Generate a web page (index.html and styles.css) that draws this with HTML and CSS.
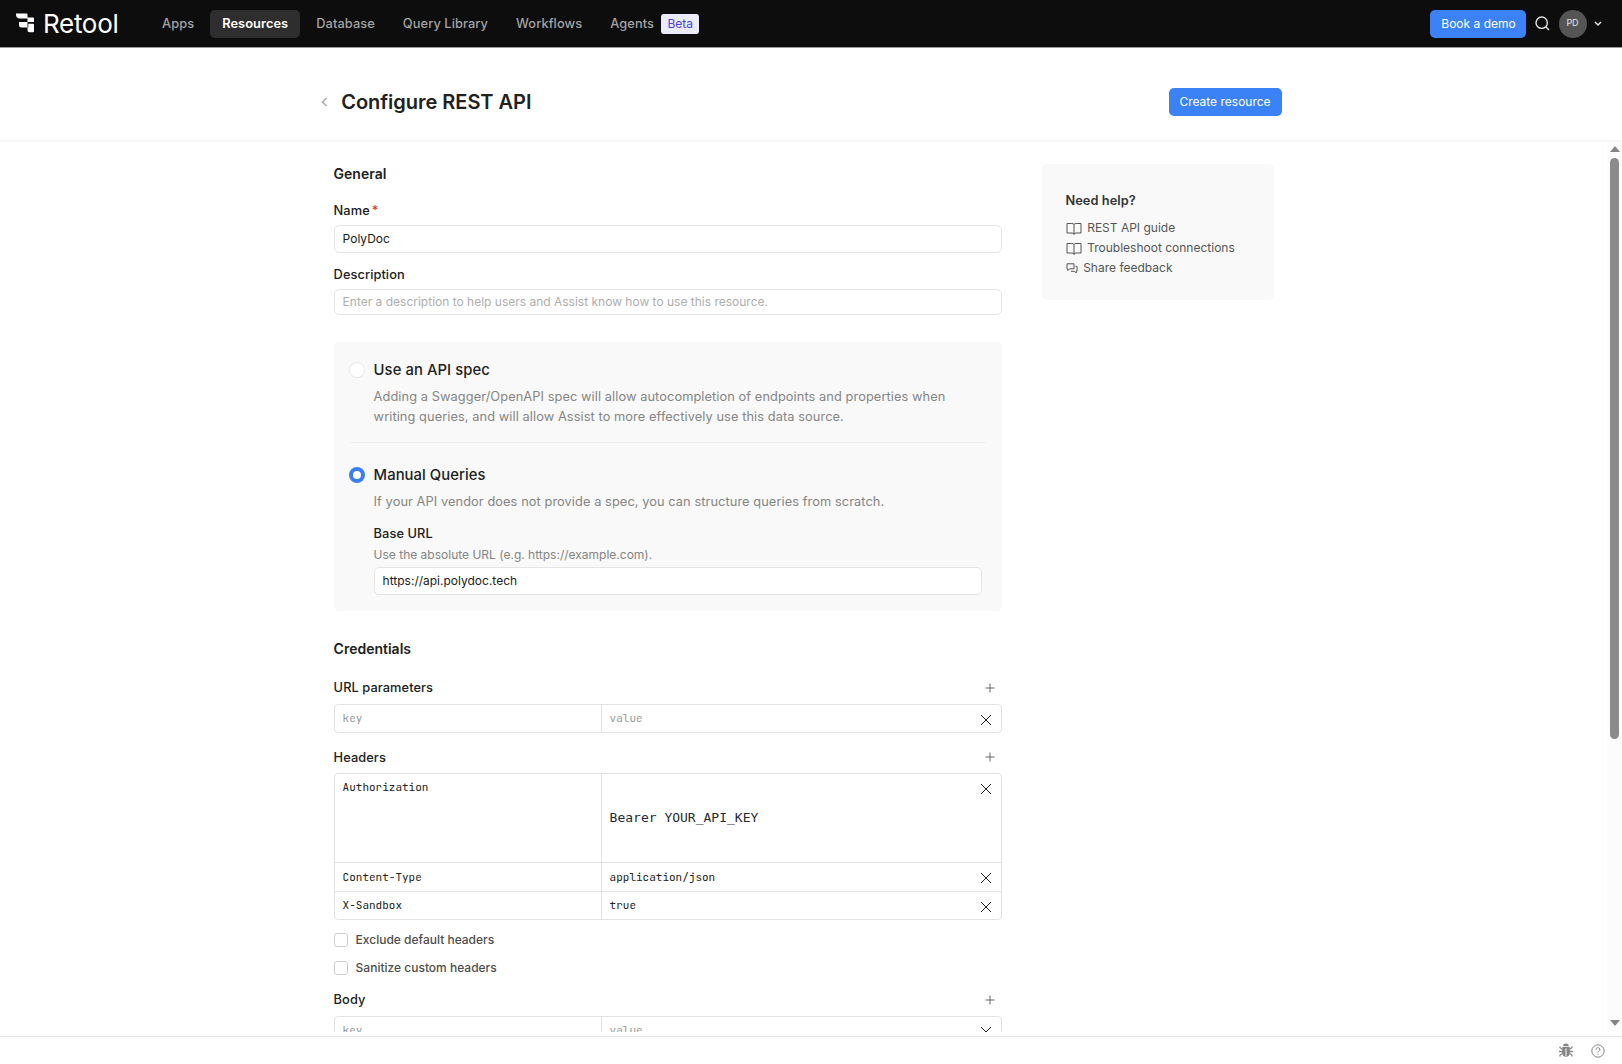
FILE: index.html
```html
<!DOCTYPE html>
<html lang="en">
<head>
<meta charset="utf-8">
<title>Configure REST API</title>
<link rel="stylesheet" href="styles.css">
</head>
<body>
<svg class="defs" aria-hidden="true">
  <symbol id="x" viewBox="0 0 12 12"><path d="M1 1l10 10M11 1L1 11"/></symbol>
  <symbol id="plus" viewBox="0 0 10 10"><path d="M5 .5v9M.5 5h9"/></symbol>
  <symbol id="book" viewBox="0 0 16 14"><path d="M8 2.500C7.600 1.800 6.800 1.500 5.800 1.500H1v9.500h5c1.100 0 1.700.4 2 1 .3-.6.9-1 2-1h5V1.500h-4.800C9.200 1.500 8.400 1.800 8 2.500zM8 2.500v10.500"/></symbol>
</svg>
<header class="topbar">
  <div class="brand">
    <svg class="mark" width="19" height="20" viewBox="0 0 19 20"><path d="M0 .5h10.500a1 1 0 0 1 1 1v3H17a1 1 0 0 1 1 1v3.500h-6.500v5.500H5.500A2.500 2.500 0 0 1 3 12V9h8.500V5.500H4A4 4 0 0 1 0 1.500zM12.300 10.800H17a1 1 0 0 1 1 1v6.500a1 1 0 0 1-1 1h-3.500a2 2 0 0 1-2-2V14.500h.8z"/></svg>
    <span class="wordmark">Retool</span>
  </div>
  <nav class="nav">
    <a>Apps</a><a class="active">Resources</a><a>Database</a><a>Query Library</a><a>Workflows</a><a>Agents</a><span class="beta">Beta</span>
  </nav>
  <div class="tools">
    <span class="btn demo">Book a demo</span>
    <svg class="search" width="15" height="15" viewBox="0 0 15 15"><circle cx="6.700" cy="6.700" r="5.700"/><path d="M10.800 10.800L14 14"/></svg>
    <span class="avatar">PD</span>
    <svg class="caret" width="8" height="6" viewBox="0 0 8 6"><path d="M1 1l3 3 3-3"/></svg>
  </div>
</header>
<section class="pagehead">
  <svg class="back" width="7" height="10" viewBox="0 0 7 10"><path d="M5.500 1L1.500 5l4 4"/></svg>
  <h1>Configure REST API</h1>
  <span class="btn create">Create resource</span>
</section>
<div class="scroll">
  <main class="main">
    <h2 class="general">General</h2>
    <div class="label name">Name<span class="req">*</span></div>
    <div class="input name-input"><span>PolyDoc</span></div>
    <div class="label desc">Description</div>
    <div class="input desc-input"><span class="ph">Enter a description to help users and Assist know how to use this resource.</span></div>
    <div class="card">
      <div class="option spec">
        <span class="radio"></span>
        <div class="body">
          <h3>Use an API spec</h3>
          <p>Adding a Swagger/OpenAPI spec will allow autocompletion of endpoints and properties when<br>writing queries, and will allow Assist to more effectively use this data source.</p>
        </div>
      </div>
      <div class="option">
        <span class="radio on"></span>
        <div class="body">
          <h3>Manual Queries</h3>
          <p>If your API vendor does not provide a spec, you can structure queries from scratch.</p>
          <div class="label base">Base URL</div>
          <div class="hint">Use the absolute URL (e.g. https://example.com).</div>
          <div class="input url-input"><span>https://api.polydoc.tech</span></div>
        </div>
      </div>
    </div>
    <h2 class="cred">Credentials</h2>
    <div class="grouphead params"><span>URL parameters</span><svg class="plus"><use href="#plus"/></svg></div>
    <div class="table">
      <div class="row"><div class="cell key ph2">key</div><div class="cell ph2">value</div><svg class="x"><use href="#x"/></svg></div>
    </div>
    <div class="grouphead headers"><span>Headers</span><svg class="plus"><use href="#plus"/></svg></div>
    <div class="table">
      <div class="row tall"><div class="cell key">Authorization</div><div class="cell token">Bearer YOUR_API_KEY</div><svg class="x"><use href="#x"/></svg></div>
      <div class="row mid"><div class="cell key">Content-Type</div><div class="cell">application/json</div><svg class="x"><use href="#x"/></svg></div>
      <div class="row"><div class="cell key">X-Sandbox</div><div class="cell">true</div><svg class="x"><use href="#x"/></svg></div>
    </div>
    <div class="checks">
      <div class="check"><i></i><span>Exclude default headers</span></div>
      <div class="check"><i></i><span>Sanitize custom headers</span></div>
    </div>
    <div class="grouphead bodyhead"><span>Body</span><svg class="plus"><use href="#plus"/></svg></div>
    <div class="table">
      <div class="row"><div class="cell key ph2">key</div><div class="cell ph2">value</div><svg class="x"><use href="#x"/></svg></div>
    </div>
  </main>
  <aside class="help">
    <h4>Need help?</h4>
    <a><svg width="16" height="14"><use href="#book"/></svg><span>REST API guide</span></a>
    <a><svg width="16" height="14"><use href="#book"/></svg><span>Troubleshoot connections</span></a>
    <a class="share"><svg width="12" height="11" viewBox="0 0 12 11"><path d="M1 .8h7v5H3.600L1.800 7.600V5.800H1zM9.500 3.300H11v5h-.8v1.700L8.500 8.300H5"/></svg><span>Share feedback</span></a>
  </aside>
  <div class="scrollbar"><i class="up"></i><i class="thumb"></i><i class="down"></i></div>
</div>
<footer class="footer">
  <svg width="14" height="15" viewBox="0 0 14 15"><path class="fill" d="M4.200 3.200a2.800 2.800 0 0 1 5.600 0zM3.200 4h7.600v5.500a3.800 4.300 0 0 1-7.600 0z"/><path class="legs" d="M1 3.500v1.200l2.500 1.500M13 3.500v1.200l-2.500 1.500M0 8.500h14M1 13.500v-1.500l2.500-1.500M13 13.500v-1.500l-2.500-1.500"/><path class="seam" d="M7 5.500V13"/></svg>
  <svg width="14" height="14" viewBox="0 0 14 14"><circle class="ring" cx="7" cy="7" r="6.200"/><path class="ring" d="M5.100 5.600a1.900 1.900 0 1 1 2.800 1.600c-.6.3-.9.700-.9 1.300M7 9.700v1"/></svg>
</footer>
</body>
</html>
```
FILE: styles.css
```css
* { box-sizing: border-box; }
body {
  margin: 0;
  width: 1622px;
  height: 1064px;
  overflow: hidden;
  display: flex;
  flex-direction: column;
  background: #fff;
  color: #212121;
  font: 12px/20px Inter, "Liberation Sans", sans-serif;
  white-space: nowrap;
}
h1, h2, h3, h4, p { margin: 0; }
svg { flex: none; fill: none; stroke: currentColor; }
.defs { display: none; }

.topbar {
  height: 47px;
  flex: none;
  display: flex;
  align-items: center;
  padding: 0 20px 0 16px;
  background: #0d0d0d;
  box-shadow: 0 1px 0 #9b9b9b;
}
.brand { display: flex; align-items: center; gap: 8px; width: 134px; color: #fff; }
.mark { fill: currentColor; stroke: none; margin-top: -1px; }
.wordmark { font-size: 26px; line-height: 28px; letter-spacing: -.3px; }
.nav { display: flex; align-items: center; font-size: 12.800px; font-weight: 500; color: #a3a3a3; }
.nav a { height: 28px; padding: 0 12px; line-height: 28px; margin-right: 4px; letter-spacing: .09px; }
.nav .active { background: #2e2e2e; color: #fff; border-radius: 5px; font-weight: 600; }
.beta { height: 20px; line-height: 20px; padding: 0 6px; margin-left: -8.500px; border-radius: 3px; background: #ececff; color: #4b3fe0; font-size: 12px; font-weight: 400; }
.tools { margin-left: auto; display: flex; align-items: center; color: #e5e5e5; }
.btn { height: 28px; line-height: 28px; border-radius: 5px; background: #3b82f6; color: #fff; text-align: center; }
.demo { width: 96px; padding-left: 1px; }
.search { margin-left: 9px; stroke-width: 1.400; }
.avatar { width: 28px; height: 28px; border-radius: 50%; margin-left: 8.500px; background: #555; font-size: 9px; line-height: 26px; text-align: center; }
.caret { margin-left: 7px; margin-right: .5px; stroke-width: 1.500; }

.pagehead { height: 95px; flex: none; display: flex; align-items: center; padding: 17px 340.500px 0 321.200px; border-bottom: 2px solid #f6f6f6; }
.back { color: #aaa; stroke-width: 1.500; }
h1 { margin-left: 13px; font-size: 20px; line-height: 28px; font-weight: 600; letter-spacing: -.03px; }
.create { width: 113px; margin-left: auto; }

.scroll { height: 890px; flex: none; display: flex; align-items: flex-start; position: relative; padding: 22px 0 0 333.600px; overflow: hidden; }
.main { width: 668px; margin-right: 40.400px; display: flex; flex-direction: column; }
h2 { font-size: 14px; line-height: 20px; font-weight: 600; }
.label, .grouphead { font-size: 12.800px; line-height: 20px; font-weight: 500; letter-spacing: .08px; }
.req { color: #d33; margin-left: 2px; }
.name { margin-top: 17px; }
.input { border: 1px solid #e5e5e5; border-radius: 5px; background: #fff; padding: 0 8px; display: flex; align-items: center; }
.name-input { height: 28px; margin-top: 4px; }
.desc { margin-top: 12px; }
.desc-input { height: 26px; margin-top: 4px; }
.ph { color: #aeaeae; }

.card { margin-top: 27px; height: 269px; padding: 17px 16px 0; border-radius: 5px; background: #f9f9f9; }
.option { display: flex; align-items: flex-start; gap: 8px; }
.radio { flex: none; width: 16px; height: 16px; margin-top: 3px; margin-left: -.2px; margin-right: .2px; border: 1px solid #e8e8e8; border-radius: 50%; background: #fff; }
.radio.on { border: 4px solid #3b7fee; }
.body { flex: 1; padding-right: 4px; }
.spec { height: 84px; margin-bottom: 21px; border-bottom: 1px solid #eee; }
h3 { font-size: 14.800px; line-height: 22px; font-weight: 500; letter-spacing: .07px; }
p { margin-top: 6px; color: #858585; font-size: 12.800px; letter-spacing: .08px; }
.base { margin-top: 12px; }
.hint { margin-top: 1px; color: #858585; }
.url-input { height: 28px; margin-top: 2px; }

.cred { margin-top: 28px; }
.grouphead { height: 20px; display: flex; align-items: center; justify-content: space-between; padding-right: 6.600px; }
.params { margin-top: 19px; }
.headers { margin-top: 14px; }
.headers span { padding-top: 2px; }
.bodyhead { margin-top: 12px; }
.plus { width: 10px; height: 10px; color: #666; }
.table { margin-top: 6px; border: 1px solid #e2e2e2; border-radius: 4px; font: 11px/16px "JetBrains Mono", "DejaVu Sans Mono", monospace; }
.row { height: 27px; display: flex; align-items: stretch; padding-right: 9px; }
.row + .row { border-top: 1px solid #e2e2e2; height: 28px; }
.cell { flex: 1; padding: 5px 8px; }
.key { flex: none; width: 267px; border-right: 1px solid #e2e2e2; }
.ph2 { color: #999; }
.x { width: 12px; height: 12px; margin-top: 9px; stroke-width: 1; }
.row.tall { height: 88px; }
.row.row.mid { height: 29px; }
.mid .cell { padding-top: 6px; }
.row .token { font: 13px/16px "DejaVu Sans Mono", monospace; padding-top: 36px; color: #1f2937; }
.checks { display: flex; flex-direction: column; gap: 8px; margin-top: 10px; color: #4d4d4d; font-weight: 500; }
.check { display: flex; align-items: center; gap: 8px; }
.check i { width: 14px; height: 14px; border: 1px solid #ccc; border-radius: 3px; }

.help { width: 232px; height: 136px; padding: 27px 23.500px 0; border-radius: 5px; background: #f9f9f9; color: #555; }
h4 { font-size: 12.800px; line-height: 20px; font-weight: 600; letter-spacing: .05px; color: #333; margin-bottom: 7px; }
.help a { display: flex; align-items: center; gap: 5px; height: 20px; padding-left: .7px; }
.help svg { margin-top: 1px; }

.scrollbar { position: absolute; right: 0; top: 0; width: 15px; height: 890px; background: #fcfcfc; display: flex; flex-direction: column; align-items: center; }
.up, .down { border: 5px solid transparent; border-top: 0; border-bottom: 6px solid #858585; margin-top: 4px; }
.thumb { width: 9px; height: 581px; margin-top: 6px; border-radius: 5px; background: #8b8b8b; }
.down { margin: auto 0 6px; border-bottom: 0; border-top: 6px solid #858585; }

.footer { margin-top: 4px; flex: 1; border-top: 1px solid #e4e4e4; background: #fff; display: flex; justify-content: flex-end; align-items: center; gap: 18px; padding: 0 17px 0 0; color: #858585; }
.fill { fill: currentColor; stroke: none; }
.legs { stroke-width: 1.300; }
.seam { stroke: #fff; }
.ring { stroke-width: 1; }
```
